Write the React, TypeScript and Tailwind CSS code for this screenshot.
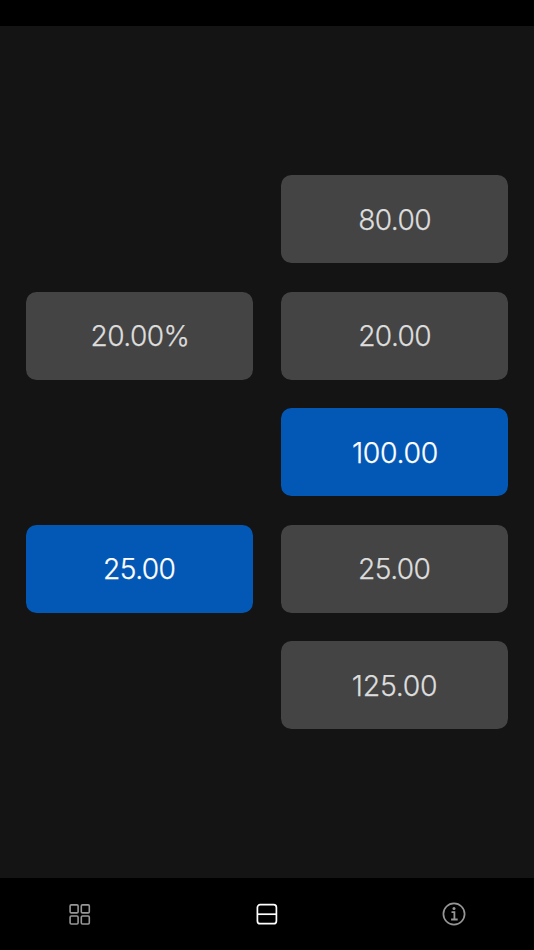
import React from "react";

type CellProps = { value: string; active?: boolean };

function Cell({ value, active = false }: CellProps) {
  const wide = value.startsWith("1");
  return (
    <button
      className={`flex h-[88px] items-center justify-center rounded-[10.5px] text-[29px] font-light [-webkit-text-stroke:0.25px_currentColor] ${
        active ? "bg-[#0458b5] text-white" : "bg-[#444444] text-[#dddddd]"
      }`}
    >
      <span
        className={`inline-block ${
          wide ? "scale-x-[0.98] tracking-[-0.3px]" : "scale-x-[0.97] tracking-[-0.6px]"
        }`}
      >
        {value}
      </span>
    </button>
  );
}

export default function App() {
  return (
    <div className="flex h-[950px] w-[534px] flex-col bg-[#141414] font-['Inter',sans-serif]">
      <div className="h-[26px] shrink-0 bg-black" />
      <main className="grid grow auto-rows-[88px] grid-cols-[227px_227px] content-start gap-x-7 gap-y-[28.5px] px-[26px] pt-[149.3px]">
        <div />
        <Cell value="80.00" />
        <Cell value="20.00%" />
        <Cell value="20.00" />
        <div />
        <Cell value="100.00" active />
        <Cell value="25.00" active />
        <Cell value="25.00" />
        <div />
        <Cell value="125.00" />
      </main>
      <nav className="flex h-[72px] shrink-0 items-center justify-between bg-black pr-[68px] pl-[67px]">
        <svg width="24" height="24" viewBox="0 0 24 24" fill="none" stroke="#969696" strokeWidth="1.6">
          <rect x="3.1" y="2.9" width="8" height="8" rx="1.2" />
          <rect x="14.3" y="2.9" width="8" height="8" rx="1.2" />
          <rect x="3.1" y="14" width="8" height="8" rx="1.2" />
          <rect x="14.3" y="14" width="8" height="8" rx="1.2" />
        </svg>
        <svg width="24" height="24" viewBox="0 0 24 24" fill="none" stroke="#fff" strokeWidth="1.7">
          <rect x="2.4" y="2.7" width="19" height="19" rx="2.8" />
          <path d="M2.4 12.2h19" />
        </svg>
        <svg width="24" height="24" viewBox="0 0 24 24" fill="none" stroke="#969696" strokeWidth="1.7">
          <circle cx="12" cy="12" r="10.6" />
          <path d="M9.5 10.2h2.9v7.3M9.1 17.5h6.6" strokeWidth="1.8" />
          <circle cx="12" cy="6.4" r="1.5" fill="#969696" stroke="none" />
        </svg>
      </nav>
    </div>
  );
}
